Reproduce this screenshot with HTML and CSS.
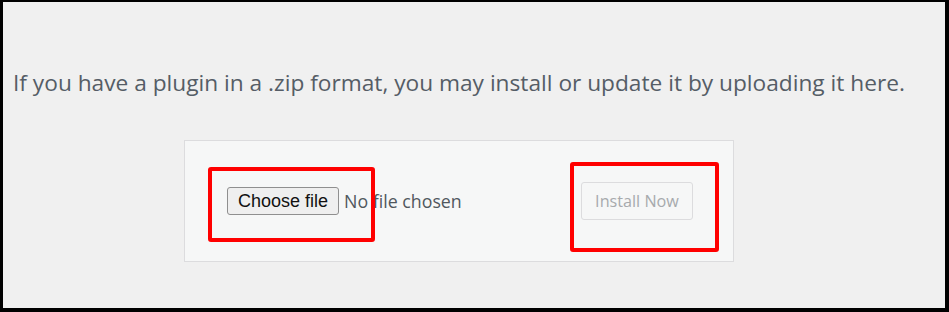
FILE: index.html
```html
<!DOCTYPE html>
<html lang="en">
<head>
    <meta charset="UTF-8">
    <title>Upload Plugin</title>
    <link rel="stylesheet" href="styles.css">
</head>
<body>
    <div class="frame">
        <p class="install-help">If you have a plugin in a .zip format, you may install or update it by uploading it here.</p>

        <div class="upload-box">
            <div class="file-field">
                <span class="file-btn">Choose file</span>
                <span class="file-name">No file chosen</span>
            </div>
            <span class="install-btn">Install Now</span>

            <!-- red highlight boxes -->
            <div class="mark mark-file"></div>
            <div class="mark mark-install"></div>
        </div>
    </div>
</body>
</html>
```

FILE: styles.css
```css
body {
    margin: 0;
    padding: 0;
    background-color: #000;
}
.frame {
    box-sizing: border-box;
    width: 949px;
    height: 312px;
    border-style: solid;
    border-color: #000;
    border-width: 2px 4px 4px 3px;
    background-color: #f0f0f0;
    overflow: hidden;
}
.install-help {
    margin: 0;
    padding: 65px 0 0 10px;
    font-family: "Open Sans", sans-serif;
    font-size: 22.7px;
    line-height: 32px;
    color: #555d66;
    white-space: nowrap;
}
.upload-box {
    position: relative;
    box-sizing: border-box;
    width: 550px;
    height: 122px;
    margin: 41px 0 0 181px;
    padding: 41px 0 0 42px;
    background-color: #f6f7f7;
    border: 1px solid #dcdcde;
    display: flex;
    align-items: flex-start;
}
.file-field {
    display: flex;
    align-items: center;
    margin-top: 5px;
    width: 354px;
}
.file-btn {
    box-sizing: border-box;
    height: 28px;
    width: 112px;
    padding-top: 1px;
    text-align: center;
    font-family: "Liberation Sans", Arial, sans-serif;
    font-size: 18px;
    line-height: 24px;
    color: #111;
    background-color: #efefef;
    border: 1px solid #8f8f8f;
    border-radius: 3px;
}
.file-name {
    margin-left: 5px;
    font-family: "Open Sans", sans-serif;
    font-size: 17.8px;
    color: #50575e;
}
.install-btn {
    box-sizing: border-box;
    width: 112px;
    height: 38px;
    font-family: "Open Sans", sans-serif;
    font-size: 16.2px;
    line-height: 36px;
    text-align: center;
    color: #a7aaad;
    background-color: #f6f7f7;
    border: 1px solid #dcdcde;
    border-radius: 3px;
}
.mark {
    position: absolute;
    box-sizing: border-box;
    border: 4px solid #ff0000;
    border-radius: 3px;
}
.mark-file {
    left: 23px;
    top: 26px;
    width: 167px;
    height: 75px;
}
.mark-install {
    left: 385px;
    top: 21px;
    width: 149px;
    height: 90px;
}
```
